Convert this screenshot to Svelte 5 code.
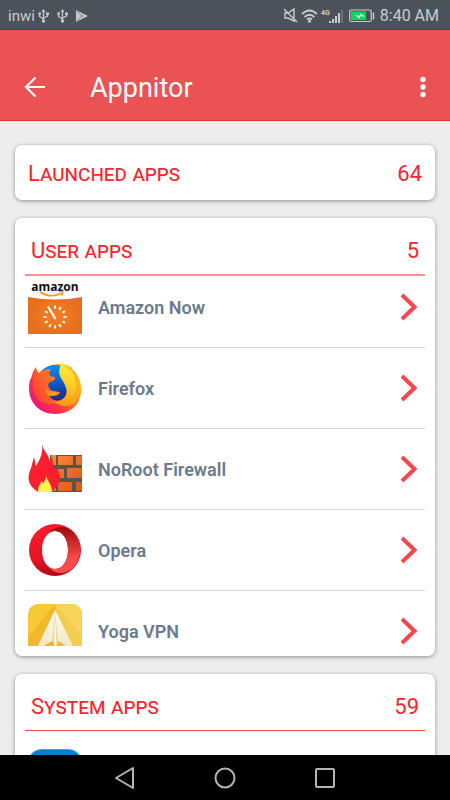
<script lang="ts">
  type App = { id: string; name: string };

  const launchedCount = 64;
  const systemCount = 59;

  const userApps: App[] = [
    { id: 'amazon', name: 'Amazon Now' },
    { id: 'firefox', name: 'Firefox' },
    { id: 'firewall', name: 'NoRoot Firewall' },
    { id: 'opera', name: 'Opera' },
    { id: 'yoga', name: 'Yoga VPN' },
  ];

  // ticks on the Amazon Now dial, in degrees
  const ticks = [0, 30, 60, 90, 120, 150, 180, 210, 240, 270, 300];
</script>

{#snippet usb()}
  <svg width="11" height="14" viewBox="0 0 11 14" aria-hidden="true">
    <path d="M5.5 2v9M1.5 5v2.5L5.5 10M9.5 5v2L5.5 9" fill="none" stroke="#c3c7ca" stroke-width="1.3" />
    <path d="M5.5 0l2 3h-4z" fill="#c3c7ca" />
    <circle cx="5.5" cy="12" r="1.7" fill="#c3c7ca" />
    <circle cx="1.7" cy="4.7" r="1.4" fill="#c3c7ca" />
    <path d="M8 3.500h3V6H8z" fill="#c3c7ca" />
  </svg>
{/snippet}

{#snippet appIcon(id: string)}
  <svg class="app__icon" width="54" height="54" viewBox="0 0 54 54" aria-hidden="true">
    {#if id === 'amazon'}
      <defs>
        <radialGradient id="amazon-bg">
          <stop offset="0" stop-color="#f47f2a" />
          <stop offset="1" stop-color="#e66f1b" />
        </radialGradient>
      </defs>
      <path d="M0 17Q27 22 54 17V54H0z" fill="url(#amazon-bg)" />
      <text class="amazon" x="27" y="11" text-anchor="middle">amazon</text>
      <path d="M12 12Q23 19 34 13" fill="none" stroke="#f79a1c" stroke-width="1.6" />
      <path d="M31 12q4-1.500 4 0t-1.500 4" fill="none" stroke="#f79a1c" stroke-width="1.2" />
      {#each ticks as angle}
        <path d="M27 25.500v3" transform="rotate({angle} 27 37)" stroke="#fff" stroke-width="2" />
      {/each}
      <path d="M20 26.500l7.500 12.500" stroke="#fff" stroke-width="2.2" />
    {:else if id === 'firefox'}
      <defs>
        <linearGradient id="fox-body" x1="0.9" y1="0.2" x2="0.15" y2="0.8">
          <stop offset="0" stop-color="#ffd21f" />
          <stop offset="0.35" stop-color="#ff8a14" />
          <stop offset="0.7" stop-color="#ff3540" />
          <stop offset="1" stop-color="#ea1c72" />
        </linearGradient>
        <linearGradient id="fox-globe" x1="0.4" y1="0" x2="0.5" y2="1">
          <stop offset="0" stop-color="#0a8fe8" />
          <stop offset="0.5" stop-color="#0a5bd0" />
          <stop offset="1" stop-color="#2b2379" />
        </linearGradient>
        <linearGradient id="fox-head" x1="1" y1="0.2" x2="0" y2="0.8">
          <stop offset="0" stop-color="#ff8f17" />
          <stop offset="1" stop-color="#fb3b3a" />
        </linearGradient>
        <linearGradient id="fox-tail" x1="0.5" y1="0" x2="0.4" y2="1">
          <stop offset="0" stop-color="#fff04a" />
          <stop offset="0.5" stop-color="#ffcf22" />
          <stop offset="1" stop-color="#ff9015" />
        </linearGradient>
      </defs>
      <path
        d="M8 6c0 3 1 5 3 6 12-12 26-10 33-6l0 3c6 5 9 11 9 17 1 4 0 8-1 10-2 10-12 17-25 17C12 53 1 42 1 27c0-5 1-9 3-12 0-3 2-6 4-9z"
        fill="url(#fox-body)"
      />
      <circle cx="27" cy="22" r="18" fill="url(#fox-globe)" />
      <path
        d="M8 6c0 3 1 5 3 6 3-3 7-4 12-4-2 2-2 4-1 7l5 1c1 3-2 4-5 5l-2 2 1 4c3 4 7 4 11 4-1 4-5 4-10 4 1 4 6 5 11 5-7 4-16 4-22-1C5 35 2 21 8 6z"
        fill="url(#fox-head)"
      />
      <path d="M18 28c3 4 8 1 13 3-2 3-5 4-9 4-3-1-4-4-4-7z" fill="#ff9a1c" />
      <path
        d="M35 1c-4 5-5 10-2 16 4 6 7 12 5 17-2 4-6 6-12 7 9 7 20 5 24-5 4-10 1-19-6-25-4-3-8-5-9-10z"
        fill="url(#fox-tail)"
      />
      <path d="M42 6c6 4 10 11 10 20 0 7-3 14-9 19 4-7 6-15 5-22-1-6-3-11-6-17z" fill="#ffa81c" opacity="0.75" />
    {:else if id === 'firewall'}
      <defs>
        <linearGradient id="brick" x1="0" y1="0" x2="1" y2="1">
          <stop offset="0" stop-color="#ff8a3d" />
          <stop offset="1" stop-color="#e05212" />
        </linearGradient>
      </defs>
      <path d="M22 13h32v37H22z" fill="#575552" />
      <path
        d="M23 13h5v10h-5zM30 14h15v9H30zM48 14h6v9h-6zM23 27h13v9H23zM39 26h15v10H39zM23 40h5v9h-5zM30 40h14v9H30zM48 40h6v9h-6z"
        fill="url(#brick)"
      />
      <path
        d="M14 2c1 7 7 10 8 18l2-6c1 7 1 11 4 14l1-3c5 14 4 18-7 25H10C-1 43-1 35 3 26l3-11c1 4 1 7 2 9 5-8 7-14 6-22z"
        fill="#fc202e"
      />
      <path d="M18 33c0 5 6 8 6 17H10c0-8 3-7 3-11 1 1 2 1 2 3 2-4 3-6 3-9z" fill="#fff44d" />
    {:else if id === 'opera'}
      <defs>
        <linearGradient id="opera-left" x1="0.3" y1="0" x2="0.6" y2="1">
          <stop offset="0" stop-color="#ff1b2d" />
          <stop offset="0.6" stop-color="#e21422" />
          <stop offset="1" stop-color="#a50914" />
        </linearGradient>
        <linearGradient id="opera-right" x1="0.5" y1="0" x2="0.5" y2="1">
          <stop offset="0" stop-color="#9c0b0d" />
          <stop offset="0.7" stop-color="#ff4b4b" />
        </linearGradient>
      </defs>
      <path
        d="M27 1a26 26 0 1 0 0 52 26 26 0 1 0 0-52zM27 8c8 0 13 9 13 19s-5 19-13 19-13-9-13-19S19 8 27 8z"
        fill="url(#opera-left)"
        fill-rule="evenodd"
      />
      <path
        d="M19 12C26 2 37 2 44 8a26 26 0 0 1 0 38c-7 6-18 6-25-4 3 3 5 4 8 4 8 0 13-9 13-19S35 8 27 8c-3 0-5 1-8 4z"
        fill="url(#opera-right)"
      />
    {:else}
      <defs>
        <clipPath id="yoga-shape"><rect width="54" height="54" rx="10" /></clipPath>
        <linearGradient id="yoga-plane" x1="0" y1="0" x2="0" y2="1">
          <stop offset="0" stop-color="#fffdf1" />
          <stop offset="1" stop-color="#f1e4bb" />
        </linearGradient>
      </defs>
      <g clip-path="url(#yoga-shape)">
        <path d="M0 0h54v54H0z" fill="#f6c937" />
        <path d="M27 0L0 33v21h54V33z" fill="#f0b92c" />
        <path d="M27 0h27v54H37z" fill="#f3cd4f" />
        <path d="M27 0h27v32z" fill="#f6d35a" />
        <path d="M27 6L7 48l12-8 8-3 8 3 13 8z" fill="url(#yoga-plane)" />
        <path d="M27 6l-3 35 3-2 3 2z" fill="#e9d594" />
        <path d="M27 6l-1 48h3z" fill="#fffdf1" />
        <path d="M17 41l8-4v4zM30 37l7 4h-7z" fill="#efb323" />
      </g>
    {/if}
  </svg>
{/snippet}

<div class="screen">
  <div class="status">
    <div class="status__group">
      <span class="status__carrier">inwi</span>
      {@render usb()}
      {@render usb()}
      <svg width="13" height="14" viewBox="0 0 13 14" aria-hidden="true">
        <path d="M0 1l12 6-12 6z" fill="#c3c7ca" />
        <path d="M1 2l6 6M1 12l6-6" stroke="#858c91" />
      </svg>
    </div>
    <div class="status__group status__group--right">
      <svg width="14" height="15" viewBox="0 0 14 15" aria-hidden="true">
        <path d="M1 5h3l6-4v12L4 10H1zM0 1l13 13" fill="none" stroke="#c8ccce" stroke-width="1.4" />
      </svg>
      <svg width="17" height="14" viewBox="0 0 17 14" aria-hidden="true">
        <path d="M1 5Q8.500-2 16 5M3.500 8q5-4.500 10 0M6 10.500q2.500-2 5 0" fill="none" stroke="#c8ccce" stroke-width="1.8" />
        <circle cx="8.5" cy="12.3" r="1.5" fill="#c8ccce" />
      </svg>
      <svg width="22" height="16" viewBox="0 0 22 16" aria-hidden="true">
        <text class="network" x="0" y="7">4G</text>
        <path d="M9 13v2M12 11v4M15 8v7M18 5v10" stroke="#c8ccce" stroke-width="2" />
        <path d="M21 2v13" stroke="#737a80" stroke-width="1.5" />
      </svg>
      <svg class="battery" width="26" height="14" viewBox="0 0 26 14" aria-hidden="true">
        <rect x="0.7" y="1" width="21.5" height="11.5" rx="1.5" fill="none" stroke="#c8ccce" stroke-width="1.2" />
        <path d="M2 2.500h15v8.500H2z" fill="#0cd65b" />
        <path d="M24.500 3.500v7" stroke="#c8ccce" stroke-width="1.5" />
        <path d="M6 6.500l5 .2V4.500l5 3-5-.2V9.500z" fill="#fff" />
      </svg>
      <time class="status__time">8:40 AM</time>
    </div>
  </div>

  <header class="toolbar">
    <button class="icon-button" aria-label="Back">
      <svg width="22" height="22" viewBox="0 0 22 22" aria-hidden="true">
        <path d="M21 11H3M11.500 1.500L2 11l9.500 9.500" fill="none" stroke="#fff" stroke-width="2.2" />
      </svg>
    </button>
    <h1>Appnitor</h1>
    <button class="icon-button icon-button--more" aria-label="More options">
      <svg width="8" height="22" viewBox="0 0 8 22" aria-hidden="true">
        <circle cx="4" cy="3.5" r="2.7" fill="#fff" />
        <circle cx="4" cy="11" r="2.7" fill="#fff" />
        <circle cx="4" cy="18.5" r="2.7" fill="#fff" />
      </svg>
    </button>
  </header>

  <main>
    <section class="card card--summary">
      <h2>Launched apps</h2>
      <span class="count">{launchedCount}</span>
    </section>

    <section class="card">
      <div class="card__head">
        <h2>User apps</h2>
        <span class="count">{userApps.length}</span>
      </div>
      <div class="list">
        <ul>
          {#each userApps as app (app.id)}
            <li>
              <button class="app">
                {@render appIcon(app.id)}
                <span class="app__name">{app.name}</span>
                <svg width="18" height="28" viewBox="0 0 18 28" aria-hidden="true">
                  <path d="M2 2l12.500 12L2 26" fill="none" stroke="#f5474d" stroke-width="4" />
                </svg>
              </button>
            </li>
          {/each}
        </ul>
      </div>
    </section>

    <section class="card">
      <div class="card__head card__head--strong">
        <h2>System apps</h2>
        <span class="count">{systemCount}</span>
      </div>
      <div class="system">
        <svg width="54" height="54" viewBox="0 0 54 54" aria-hidden="true">
          <rect width="54" height="54" rx="14" fill="#20aee0" />
          <rect y="1" width="54" height="53" rx="14" fill="#0780cc" />
        </svg>
      </div>
    </section>
  </main>

  <nav>
    <button aria-label="Back">
      <svg width="24" height="24" viewBox="0 0 24 24">
        <path d="M20 2v20L3 12z" />
      </svg>
    </button>
    <button aria-label="Home">
      <svg width="24" height="24" viewBox="0 0 24 24">
        <circle cx="12" cy="12" r="9.5" />
      </svg>
    </button>
    <button aria-label="Recent apps">
      <svg width="24" height="24" viewBox="0 0 24 24">
        <rect x="3" y="3" width="18" height="18" rx="1" />
      </svg>
    </button>
  </nav>
</div>

<style>
  :global(body) {
    background: #ededed;
  }

  .screen {
    display: flex;
    flex-direction: column;
    height: 100vh;
    overflow: hidden;
    font-family: Roboto, 'Noto Sans', sans-serif;
  }

  button {
    padding: 0;
    border: 0;
    background: none;
    font: inherit;
    cursor: pointer;
  }

  svg {
    display: block;
    flex: none;
  }

  h1,
  h2,
  ul {
    margin: 0;
    padding: 0;
  }

  .status {
    box-sizing: border-box;
    display: flex;
    flex: none;
    align-items: center;
    justify-content: space-between;
    height: 30px;
    padding: 2px 11px 0 8px;
    border-bottom: 1px solid #2f4a50;
    background: #4b525a;
    color: #c8ccce;
  }

  .status__group {
    display: flex;
    align-items: center;
    gap: 8px;
  }

  .status__group--right {
    gap: 3px;
  }

  .status__carrier {
    margin-right: -5px;
    font-size: 15px;
  }

  .status__time {
    margin-left: 2px;
    font-size: 16px;
  }

  .battery {
    margin-left: 3px;
  }

  .network {
    fill: #c8ccce;
    font-size: 7px;
    font-weight: 700;
  }

  .toolbar {
    box-sizing: border-box;
    display: flex;
    flex: none;
    align-items: center;
    height: 91px;
    padding: 23px 12px 0 16px;
    border-bottom: 1px solid #e8272c;
    background: #eb5254;
    color: #fff;
  }

  .icon-button {
    display: grid;
    place-items: center;
    width: 38px;
    height: 48px;
  }

  .icon-button--more {
    width: 30px;
    margin-left: auto;
  }

  h1 {
    margin-left: 36px;
    padding-top: 2px;
    font-size: 27px;
    font-weight: 400;
  }

  main {
    display: flex;
    flex: 1;
    flex-direction: column;
    gap: 18px;
    min-height: 0;
    padding: 24px 15px 0;
    overflow: hidden;
    background: #ededed;
  }

  .card {
    flex: none;
    padding: 0 10px 10px;
    border-radius: 7px;
    background: #fff;
    box-shadow: 0 1px 4px rgba(0, 0, 0, 0.4);
  }

  .card--summary,
  .card__head {
    display: flex;
    align-items: center;
    justify-content: space-between;
    height: 56px;
    color: #f9252f;
  }

  .card--summary {
    height: 55px;
    padding: 0 13px;
  }

  .card__head {
    padding: 0 6px;
    border-bottom: 2px solid #fb8f92;
  }

  .card__head--strong {
    border-bottom: 1px solid #f9484d;
  }

  h2,
  .count {
    padding-top: 8px;
    font-size: 22px;
    font-weight: 400;
  }

  .card--summary h2,
  .card--summary .count {
    padding-top: 2px;
  }

  h2 {
    font-variant: small-caps;
  }

  .list {
    height: 370px;
    overflow: hidden;
  }

  ul {
    margin-top: -9px;
    list-style: none;
  }

  li {
    border-bottom: 1px solid #d6d6d6;
  }

  .app {
    display: flex;
    align-items: center;
    width: 100%;
    height: 80px;
    padding: 0 7px 0 3px;
    text-align: left;
  }

  .app__icon {
    overflow: visible;
  }

  .app__name {
    flex: 1;
    margin-left: 16px;
    color: #6c7a8b;
    font-size: 18px;
    font-weight: 600;
  }

  .amazon {
    fill: #111;
    font-family: 'Noto Sans', sans-serif;
    font-size: 12px;
    font-weight: 700;
  }

  .system {
    padding: 18px 3px 0;
  }

  nav {
    display: flex;
    flex: none;
    align-items: center;
    justify-content: center;
    gap: 76px;
    height: 45px;
    background: #000;
  }

  nav svg {
    fill: none;
    stroke: #b5b5b5;
    stroke-width: 2px;
    stroke-linejoin: round;
  }
</style>
